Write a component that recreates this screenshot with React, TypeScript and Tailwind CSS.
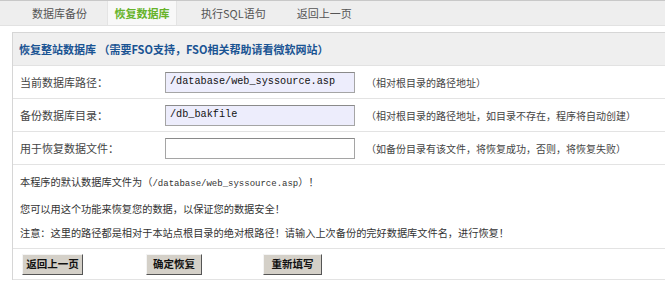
import React from "react";

const cjk = { fontFamily: '"Noto Sans CJK SC", "Noto Sans", sans-serif' };
const mono = { fontFamily: '"Liberation Mono", "DejaVu Sans Mono", "Noto Sans CJK SC", monospace' };

function Row({ label, value, hint, filled }: { label: string; value: string; hint: string; filled: boolean }) {
  return (
    <div className="flex items-center h-[33px] border-b border-[#e3e3e3] whitespace-nowrap">
      <div className="w-[152px] shrink-0 pl-[7px] text-[11px] text-[#444]">{label}</div>
      <div
        className={`w-[190px] shrink-0 h-[21px] border border-[#a5a5a5] border-t-[#8a8a8a] flex items-center pl-[4px] text-[10.2px] text-[#111] ${filled ? "bg-[#ededfc]" : "bg-white"}`}
        style={mono}
      >
        {value}
      </div>
      <div className="ml-[11px] text-[10px] text-[#444]">{hint}</div>
    </div>
  );
}

function Btn({ children, bold, w }: { children: React.ReactNode; bold?: boolean; w: string }) {
  return (
    <div
      className={`${w} h-[21px] flex items-center justify-center bg-[#d4d0c8] border border-t-[#f4f4f4] border-l-[#f4f4f4] border-r-[#555] border-b-[#555] text-[10.5px] text-[#111] whitespace-nowrap ${bold ? "font-bold" : "font-semibold"}`}
    >
      {children}
    </div>
  );
}

export default function App() {
  return (
    <div className="w-[665px] h-[283px] bg-white overflow-hidden text-[#333]" style={cjk}>
      {/* tab bar */}
      <div className="flex h-[26px] bg-[#eeeeee] border-t border-[#c8c8c8] border-b border-b-[#e2e2e2] whitespace-nowrap text-[11px] text-[#555]">
        <div className="w-[107px] flex items-center pl-[32px]">数据库备份</div>
        <div className="w-[70px] flex items-center justify-center font-bold text-[#66b32a] bg-[#f8f8f8] border-x border-[#e4e4e4]">恢复数据库</div>
        <div className="flex items-center pl-[24px]">执行SQL语句</div>
        <div className="flex items-center pl-[31px]">返回上一页</div>
      </div>
      <div className="h-[6px]" />
      {/* content box */}
      <div className="ml-[12px] border-l border-t border-[#d6d6d6]">
        <div className="h-[33px] bg-[#efefef] border-b border-[#e2e2e2] flex items-center pl-[6px] text-[11px] font-bold text-[#1a5493] whitespace-nowrap">
          恢复整站数据库 （需要FSO支持，FSO相关帮助请看微软网站）
        </div>
        <Row label="当前数据库路径：" value="/database/web_syssource.asp" hint="（相对根目录的路径地址）" filled />
        <Row label="备份数据库目录：" value="/db_bakfile" hint="（相对根目录的路径地址，如目录不存在，程序将自动创建）" filled />
        <Row label="用于恢复数据文件：" value="" hint="（如备份目录有该文件，将恢复成功，否则，将恢复失败）" filled={false} />
        <div className="flex flex-col pl-[7px] pt-[7px] pb-[6px] gap-[5px] border-b border-[#e3e3e3] text-[10.2px] text-[#333] leading-[19px] whitespace-nowrap">
          <div>
            本程序的默认数据库文件为（<span className="text-[9px]" style={mono}>/database/web_syssource.asp</span>）！
          </div>
          <div>您可以用这个功能来恢复您的数据，以保证您的数据安全！</div>
          <div>注意：这里的路径都是相对于本站点根目录的绝对根路径！请输入上次备份的完好数据库文件名，进行恢复！</div>
        </div>
        <div className="h-[31px] flex items-center border-b border-[#e3e3e3] pl-[9px]">
          <Btn w="w-[61px]">返回上一页</Btn>
          <div className="ml-[63px]">
            <Btn bold w="w-[56px]">确定恢复</Btn>
          </div>
          <div className="ml-[61px]">
            <Btn w="w-[59px]">重新填写</Btn>
          </div>
        </div>
      </div>
    </div>
  );
}
